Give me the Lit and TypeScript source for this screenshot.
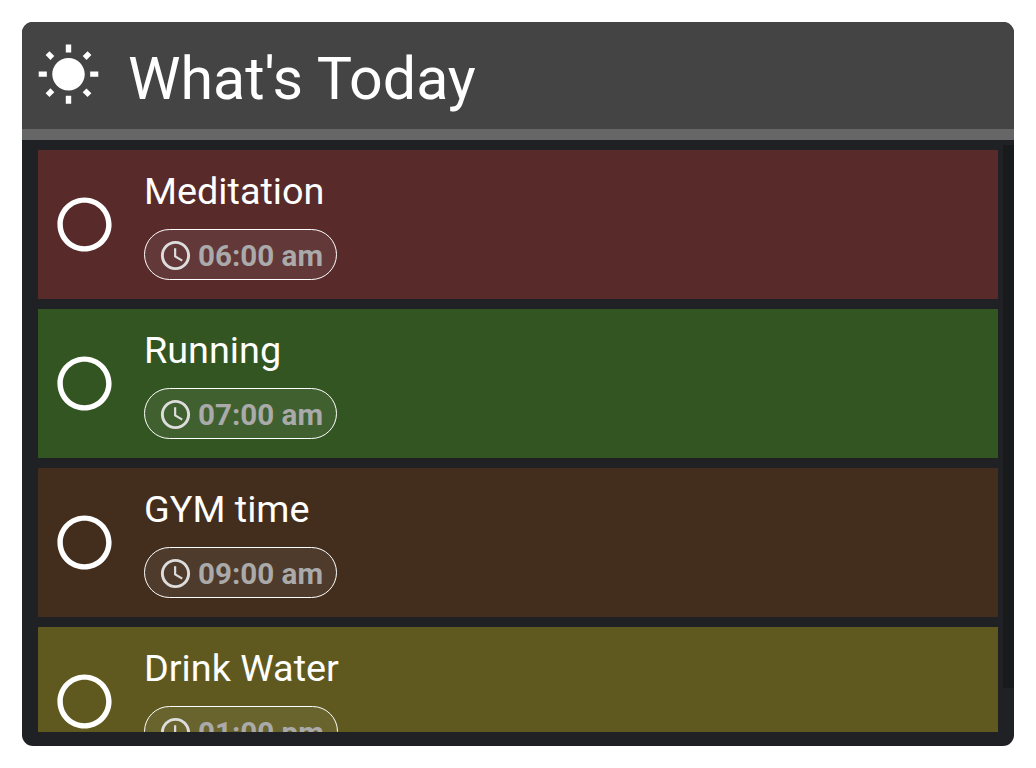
import { LitElement, html, css } from "lit";
import { customElement, property } from "lit/decorators.js";

@customElement("task-row")
class TaskRow extends LitElement {
  @property() name = "";
  @property() time = "";

  static styles = css`
    :host {
      display: flex;
      box-sizing: border-box;
      height: 149px;
      flex: none;
      align-items: center;
      padding-left: 13.9px;
      color: #fff;
    }
    .check {
      display: block;
      width: 65px;
      height: 65px;
      fill: #fff;
      flex: none;
    }
    .body {
      margin-left: 27.1px;
      height: 149px;
      display: flex;
      flex-direction: column;
      align-items: flex-start;
    }
    .name {
      margin-top: 18px;
      font-size: 37.8px;
      line-height: 46px;
      white-space: nowrap;
    }
    .chip {
      box-sizing: border-box;
      margin-top: 15px;
      height: 51px;
      display: flex;
      align-items: center;
      padding: 2px 13.2px 0 13px;
      border: 1px solid #fff;
      border-radius: 26px;
      background: rgba(255, 255, 255, 0.065);
    }
    .clock {
      display: block;
      width: 35px;
      height: 35px;
      fill: #ddd;
    }
    .time {
      margin-left: 5px;
      font-size: 29.6px;
      line-height: 36px;
      font-weight: 700;
      color: #aaa;
      white-space: nowrap;
    }
  `;

  render() {
    return html`
      <svg class="check" viewBox="0 0 24 24">
        <path d="M12 2C6.48 2 2 6.48 2 12s4.48 10 10 10 10-4.48 10-10S17.52 2 12 2zm0 18c-4.42 0-8-3.58-8-8s3.58-8 8-8 8 3.58 8 8-3.58 8-8 8z" />
      </svg>
      <div class="body">
        <div class="name">${this.name}</div>
        <div class="chip">
          <svg class="clock" viewBox="0 0 24 24">
            <path d="M11.99 2C6.47 2 2 6.48 2 12s4.47 10 9.99 10C17.52 22 22 17.52 22 12S17.52 2 11.99 2zM12 20c-4.42 0-8-3.58-8-8s3.58-8 8-8 8 3.58 8 8-3.58 8-8 8z" />
            <path d="M12.5 7H11v6l5.25 3.15.75-1.23-4.5-2.67z" />
          </svg>
          <span class="time">${this.time}</span>
        </div>
      </div>
    `;
  }
}

@customElement("app-root")
class AppRoot extends LitElement {
  static styles = css`
    :host {
      display: block;
      box-sizing: border-box;
      height: 768px;
      padding: 22px;
      background: #fff;
      font-family: Roboto, sans-serif;
      overflow: hidden;
    }
    .card {
      box-sizing: border-box;
      width: 992px;
      height: 724px;
      display: flex;
      flex-direction: column;
      border-radius: 11px;
      overflow: hidden;
      background: #202124;
      color: #fff;
    }
    .header {
      box-sizing: border-box;
      height: 118px;
      flex: none;
      display: flex;
      align-items: flex-start;
      padding-left: 14px;
      background: #444;
      border-bottom: 11px solid #666;
    }
    .sun {
      display: block;
      width: 65px;
      height: 65px;
      margin-top: 20.9px;
      fill: #fff;
    }
    .title {
      margin: 21px 0 0 27px;
      font-size: 59.15px;
      line-height: 72px;
      font-weight: 400;
      white-space: nowrap;
    }
    .content {
      flex: none;
      height: 592px;
      display: flex;
    }
    .list {
      box-sizing: border-box;
      width: 976px;
      padding: 10px 0 0 16px;
      display: flex;
      flex-direction: column;
      gap: 10px;
      overflow: hidden;
    }
    .thumb {
      width: 11px;
      height: 543px;
      margin: 5px 0 0 5px;
      background: #191a1b;
    }
    .red { background: #582a2a; }
    .green { background: #335522; }
    .brown { background: #432d1c; }
    .olive { background: #5f591f; }
  `;

  private tasks = [
    { name: "Meditation", time: "06:00 am", tone: "red" },
    { name: "Running", time: "07:00 am", tone: "green" },
    { name: "GYM time", time: "09:00 am", tone: "brown" },
    { name: "Drink Water", time: "01:00 pm", tone: "olive" },
  ];

  render() {
    return html`
      <section class="card">
        <header class="header">
          <svg class="sun" viewBox="0 0 24 24">
            <path d="M6.76 4.84l-1.8-1.79-1.41 1.41 1.79 1.79 1.42-1.41zM4 10.5H1v2h3v-2zm9-9.95h-2V3.5h2V.55zm7.45 3.91l-1.41-1.41-1.79 1.79 1.41 1.41 1.79-1.79zm-3.21 13.7l1.79 1.8 1.41-1.41-1.8-1.79-1.4 1.4zM20 10.5v2h3v-2h-3zm-8-5c-3.31 0-6 2.69-6 6s2.69 6 6 6 6-2.69 6-6-2.69-6-6-6zm-1 16.95h2V19.5h-2v2.95zm-7.45-3.91l1.41 1.41 1.79-1.8-1.41-1.41-1.79 1.8z" />
          </svg>
          <div class="title">What's Today</div>
        </header>
        <div class="content">
          <div class="list">
            ${this.tasks.map(
              (t) => html`<task-row class=${t.tone} .name=${t.name} .time=${t.time}></task-row>`
            )}
          </div>
          <div class="thumb"></div>
        </div>
      </section>
    `;
  }
}
